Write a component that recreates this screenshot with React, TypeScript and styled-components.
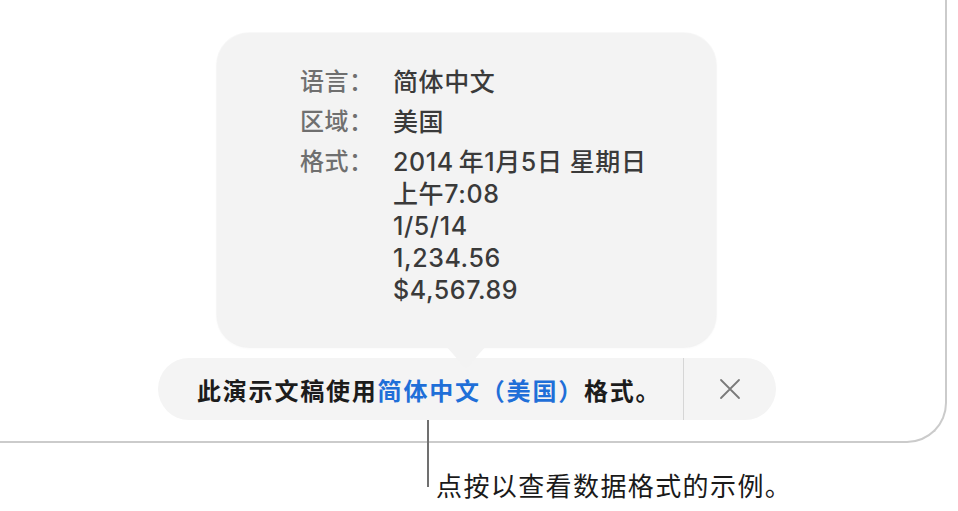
import React from "react"
import styled, { createGlobalStyle } from "styled-components"

const GlobalStyle = createGlobalStyle`
  html, body {
    margin: 0;
    padding: 0;
    background: #ffffff;
  }
  body {
    font-family: "Inter", "Noto Sans CJK SC", sans-serif;
    -webkit-font-smoothing: antialiased;
  }
`

const Page = styled.div`
  position: relative;
  width: 958px;
  height: 511px;
  overflow: hidden;
  background: #ffffff;
`

const Window = styled.div`
  box-sizing: border-box;
  width: 947px;
  height: 443px;
  border-right: 2px solid #cbcbcb;
  border-bottom: 2px solid #cbcbcb;
  border-bottom-right-radius: 40px;
  padding-top: 33px;
  display: flex;
  flex-direction: column;
`

const Popover = styled.div`
  position: relative;
  box-sizing: border-box;
  margin-left: 217px;
  width: 499px;
  height: 314px;
  border-radius: 32px;
  background: #f3f3f3;
  box-shadow: 0 0 0 1px rgba(0, 0, 0, 0.025), 0 1px 3px rgba(0, 0, 0, 0.04);
  padding: 33px 0 0 83px;
`

const Arrow = styled.svg`
  position: absolute;
  left: 229px;
  bottom: -22px;
`

const InfoGrid = styled.div`
  display: grid;
  grid-template-columns: 93px auto;
  row-gap: 8px;
  line-height: 32px;
  font-weight: 500;
`

const Label = styled.div`
  font-size: 24px;
  letter-spacing: 0.5px;
  color: #6f6f6f;
`

const Value = styled.div`
  font-size: 25px;
  letter-spacing: 0.6px;
  color: #3a3a3a;
  white-space: pre;
`

const Bar = styled.div`
  box-sizing: border-box;
  margin: 11px 0 0 158px;
  width: 618px;
  height: 62px;
  border-radius: 31px;
  background: #f4f4f4;
  display: flex;
  align-items: stretch;
`

const Message = styled.div`
  flex: 1;
  display: flex;
  align-items: center;
  padding-left: 39px;
  font-size: 24px;
  letter-spacing: 1.8px;
  font-weight: 700;
  color: #1c1c1c;
`

const Link = styled.span`
  color: #1f6fd8;
`

const Divider = styled.div`
  width: 1px;
  background: #d6d6d6;
`

const CloseButton = styled.div`
  width: 92px;
  display: flex;
  align-items: center;
  justify-content: center;
  color: #7a7a7a;
`

const Leader = styled.div`
  position: absolute;
  left: 427px;
  top: 420px;
  width: 2px;
  height: 67px;
  background: #707070;
`

const Caption = styled.div`
  margin: 29px 0 0 436px;
  font-size: 26px;
  letter-spacing: 1.4px;
  line-height: 30px;
  color: #1a1a1a;
`

const formatLines = [
  "2014\u2009年1月5日 星期日",
  "上午7:08",
  "1/5/14",
  "1,234.56",
  "$4,567.89",
]

export default function App() {
  return (
    <Page>
      <GlobalStyle />
      <Window>
        <Popover>
          <InfoGrid>
            <Label>语言：</Label>
            <Value>简体中文</Value>
            <Label>区域：</Label>
            <Value>美国</Value>
            <Label>格式：</Label>
            <Value>{formatLines.join("\n")}</Value>
          </InfoGrid>
          <Arrow width="40" height="23" viewBox="0 0 40 23">
            <path d="M0 0 H40 L22.5 20 Q20 23 17.5 20 Z" fill="#f3f3f3" />
          </Arrow>
        </Popover>
        <Bar>
          <Message>
            此演示文稿使用<Link>简体中文（美国）</Link>格式。
          </Message>
          <Divider />
          <CloseButton>
            <svg width="22" height="22" viewBox="0 0 22 22">
              <path
                d="M2 2 L20 20 M20 2 L2 20"
                stroke="currentColor"
                strokeWidth="1.8"
                strokeLinecap="round"
              />
            </svg>
          </CloseButton>
        </Bar>
      </Window>
      <Leader />
      <Caption>点按以查看数据格式的示例。</Caption>
    </Page>
  )
}
